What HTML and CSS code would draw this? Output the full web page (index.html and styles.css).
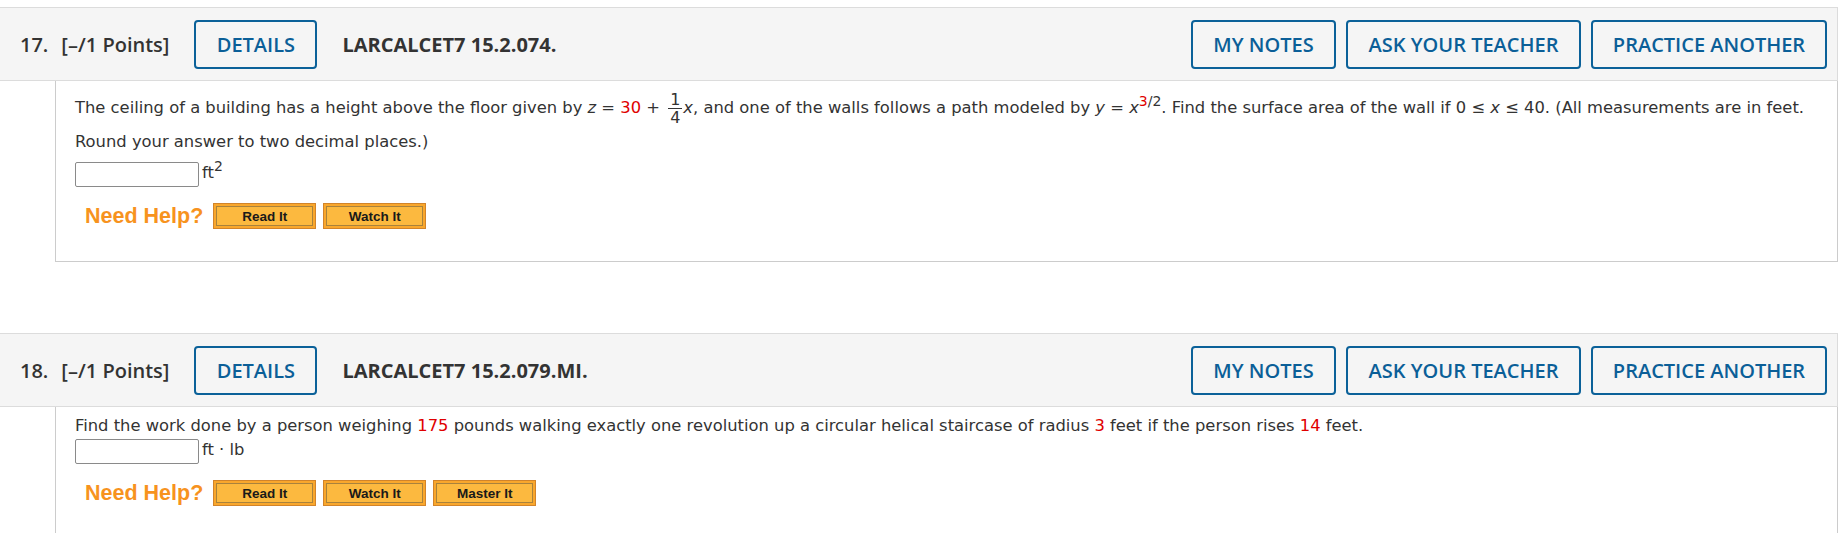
FILE: index.html
```html
<!DOCTYPE html>
<html>
<head>
<meta charset="utf-8">
<link rel="stylesheet" href="styles.css">
</head>
<body>
<div class="page">
  <section class="question q17">
    <header class="qhead">
      <span class="qnum">17.</span>
      <span class="qpts">[–/1 Points]</span>
      <button class="obtn details">DETAILS</button>
      <span class="qid">LARCALCET7 15.2.074.</span>
      <div class="actions">
        <button class="obtn">MY NOTES</button>
        <button class="obtn">ASK YOUR TEACHER</button>
        <button class="obtn">PRACTICE ANOTHER</button>
      </div>
    </header>
    <div class="qbody">
      <p class="qtext first">The ceiling of a building has a height above the floor given by <i>z</i> = <span class="red">30</span> + <span class="frac"><span class="num">1</span><span class="den">4</span></span><i>x</i>, and one of the walls follows a path modeled by <i>y</i> = <i>x</i><sup><span class="red">3</span>/2</sup>. Find the surface area of the wall if 0 ≤ <i>x</i> ≤ 40. (All measurements are in feet.</p>
      <p class="qtext second">Round your answer to two decimal places.)</p>
      <div class="answer"><span class="inbox"></span><span class="unit">ft<sup>2</sup></span></div>
      <div class="help">
        <span class="needhelp">Need Help?</span>
        <span class="hbtn">Read It</span>
        <span class="hbtn">Watch It</span>
      </div>
    </div>
  </section>

  <section class="question q18">
    <header class="qhead">
      <span class="qnum">18.</span>
      <span class="qpts">[–/1 Points]</span>
      <button class="obtn details">DETAILS</button>
      <span class="qid">LARCALCET7 15.2.079.MI.</span>
      <div class="actions">
        <button class="obtn">MY NOTES</button>
        <button class="obtn">ASK YOUR TEACHER</button>
        <button class="obtn">PRACTICE ANOTHER</button>
      </div>
    </header>
    <div class="qbody">
      <p class="qtext">Find the work done by a person weighing <span class="red">175</span> pounds walking exactly one revolution up a circular helical staircase of radius <span class="red">3</span> feet if the person rises <span class="red">14</span> feet.</p>
      <div class="answer"><span class="inbox"></span><span class="unit">ft · lb</span></div>
      <div class="help">
        <span class="needhelp">Need Help?</span>
        <span class="hbtn">Read It</span>
        <span class="hbtn">Watch It</span>
        <span class="hbtn">Master It</span>
      </div>
    </div>
  </section>
</div>
</body>
</html>
```

FILE: styles.css
```css
html, body {
  margin: 0;
  padding: 0;
  background: #ffffff;
}

.page {
  width: 1838px;
  padding-top: 7px;
}

.question.q18 {
  margin-top: 71px;
}

.qhead {
  display: flex;
  align-items: center;
  height: 72px;
  background: #f5f5f5;
  border: 1px solid #dcdcdc;
  border-left: none;
  padding: 0 10px 0 20px;
  font-family: "Open Sans", sans-serif;
  font-size: 20px;
  color: #333333;
}

.qnum {
  font-weight: 600;
  margin-right: 13px;
}

.qpts {
  font-weight: 600;
}

.qid {
  font-weight: 700;
  margin-left: 25px;
}

.obtn {
  font-family: "Open Sans", sans-serif;
  font-size: 20px;
  font-weight: 600;
  color: #0b5f98;
  background: transparent;
  border: 2px solid #0b6199;
  border-radius: 4px;
  height: 49px;
  padding: 0;
  cursor: pointer;
}

.details {
  margin-left: 25px;
  width: 123px;
}

.actions {
  margin-left: auto;
  display: flex;
  gap: 10px;
}

.actions .obtn:nth-child(1) { width: 145px; }
.actions .obtn:nth-child(2) { width: 235px; }
.actions .obtn:nth-child(3) { width: 236px; }

.qbody {
  margin-left: 55px;
  border: 1px solid #cccccc;
  border-top: none;
  padding: 0 0 0 19px;
  font-family: "DejaVu Sans", Verdana, sans-serif;
  font-size: 16.35px;
  color: #333333;
}

.q17 .qbody {
  height: 180px;
}

.q18 .qbody {
  height: 140px;
  border-bottom: none;
}

.qtext {
  margin: 0;
}

.q17 .qtext.first {
  padding-top: 7px;
  line-height: 40px;
}

.q17 .qtext.second {
  line-height: 28px;
}

.q18 .qtext {
  padding-top: 9px;
  line-height: 20px;
}

i {
  font-style: italic;
}

.red {
  color: #e00000;
}

sup {
  font-size: 14px;
  vertical-align: 7px;
  line-height: 0;
}

.frac {
  display: inline-flex;
  flex-direction: column;
  align-items: center;
  vertical-align: middle;
  font-size: 16px;
  line-height: 17px;
  margin: 0 1px 0 3px;
}

.frac .num {
  border-bottom: 1px solid #333333;
  padding: 0 2px;
}

.frac .den {
  padding: 0 2px;
}

.answer {
  display: flex;
  align-items: center;
  height: 25px;
}

.q17 .answer {
  margin-top: 6px;
}

.q18 .answer {
  margin-top: 3px;
}

.inbox {
  display: inline-block;
  width: 122px;
  height: 23px;
  border: 1px solid #8a8a8a;
  border-radius: 2px;
  background: #ffffff;
}

.unit {
  margin-left: 3px;
  margin-top: -4px;
}

.help {
  display: flex;
  align-items: center;
  gap: 7px;
  margin-left: 10px;
  margin-top: 16px;
}

.needhelp {
  font-family: "Liberation Sans", Arial, sans-serif;
  font-weight: 700;
  font-size: 21.5px;
  color: #f7931e;
  margin-right: 3px;
}

.hbtn {
  display: inline-flex;
  align-items: center;
  justify-content: center;
  box-sizing: border-box;
  width: 103px;
  height: 26px;
  font-family: "Liberation Sans", Arial, sans-serif;
  font-weight: 700;
  font-size: 13.5px;
  color: #1a1a1a;
  background: #fcb93f;
  border: 1px solid #d2842a;
  box-shadow: inset 0 0 0 2px #f9a72c, inset 0 0 0 3px #a8823d;
}
```
